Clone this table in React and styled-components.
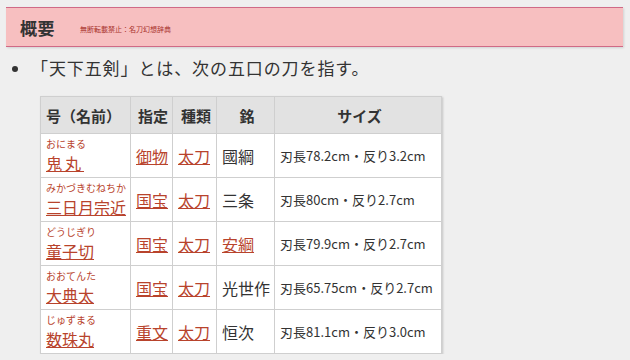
import React from 'react'
import styled, { createGlobalStyle } from 'styled-components'

const GlobalStyle = createGlobalStyle`
  body {
    margin: 0;
    background: #efefef;
    font-family: "Noto Sans CJK JP", "Noto Sans", sans-serif;
    color: #333;
  }
`

// ***** heading band *****
const Page = styled.div`
  padding: 7px 7px 0 6px;
`
const Heading = styled.div`
  display: flex;
  align-items: center;
  height: 38px;
  padding-left: 14px;
  background: #f7bfc0;
  border-top: 1px solid #d06a86;
  border-bottom: 1px solid #d06a86;
  box-shadow: 1px 1px 2px rgba(0, 0, 0, 0.12);
`
const Title = styled.h2`
  margin: 0;
  font-size: 17px;
  font-weight: bold;
  color: #333;
  letter-spacing: 0.5px;
`
const Notice = styled.span`
  margin-left: 25px;
  margin-top: 4px;
  font-size: 7px;
  color: #a8322c;
`

// ***** bullet list *****
const List = styled.ul`
  margin: 8px 0 0;
  padding-left: 25px;
  font-size: 17px;
  line-height: 26px;
  letter-spacing: 0.9px;
  color: #333;
  li::marker {
    font-size: 16px;
  }
`

// ***** swords table *****
const Table = styled.table`
  margin: 15px 0 0 34px;
  width: 401px;
  table-layout: fixed;
  border-collapse: collapse;
  background: #fff;
  box-shadow: 1px 1px 2px rgba(0, 0, 0, 0.18);
`
const Th = styled.th`
  box-sizing: border-box;
  height: 37px;
  padding: 0 2px 0 5px;
  background: #e2e2e2;
  border: 1px solid #cfcfcf;
  font-size: 15px;
  font-weight: bold;
  color: #333;
  white-space: nowrap;
  text-align: ${p => p.$left ? 'left' : 'center'};
  width: ${p => p.$w}px;
`
const Td = styled.td`
  height: 43px;
  padding: 0 0 0 5px;
  border: 1px solid #cfcfcf;
  font-size: ${p => p.$small ? 13 : 16}px;
  color: #333;
  vertical-align: middle;
  white-space: nowrap;
  overflow: hidden;
`
const NameCell = styled.div`
  display: flex;
  flex-direction: column;
  align-items: flex-start;
`
const Reading = styled.span`
  font-size: 10px;
  line-height: 15px;
  color: #b8432c;
`
const Name = styled.a`
  font-size: 16px;
  line-height: 24px;
  color: #b8432c;
  text-decoration: underline;
  letter-spacing: ${p => p.$spread ? '3px' : '0'};
`
const Link = styled.a`
  color: #b8432c;
  text-decoration: underline;
`

const swords = [
  { reading: 'おにまる', name: '鬼丸', spread: true, grade: '御物', type: '太刀', smith: '國綱', smithLink: false, size: '刃長78.2cm・反り3.2cm' },
  { reading: 'みかづきむねちか', name: '三日月宗近', grade: '国宝', type: '太刀', smith: '三条', smithLink: false, size: '刃長80cm・反り2.7cm' },
  { reading: 'どうじぎり', name: '童子切', grade: '国宝', type: '太刀', smith: '安綱', smithLink: true, size: '刃長79.9cm・反り2.7cm' },
  { reading: 'おおてんた', name: '大典太', grade: '国宝', type: '太刀', smith: '光世作', smithLink: false, size: '刃長65.75cm・反り2.7cm' },
  { reading: 'じゅずまる', name: '数珠丸', grade: '重文', type: '太刀', smith: '恒次', smithLink: false, size: '刃長81.1cm・反り3.0cm' },
]

const App = () => {
  return (
    <Page>
      <GlobalStyle />
      <Heading>
        <Title>概要</Title>
        <Notice>無断転載禁止：名刀幻想辞典</Notice>
      </Heading>
      <List>
        <li>「天下五剣」とは、次の五口の刀を指す。</li>
      </List>
      <Table>
        <thead>
          <tr>
            <Th $w={90} $left>号（名前）</Th>
            <Th $w={42}>指定</Th>
            <Th $w={44}>種類</Th>
            <Th $w={58}>銘</Th>
            <Th $w={167}>サイズ</Th>
          </tr>
        </thead>
        <tbody>
          {swords.map(s => (
            <tr key={s.name}>
              <Td>
                <NameCell>
                  <Reading>{s.reading}</Reading>
                  <Name href="#" $spread={s.spread}>{s.name}</Name>
                </NameCell>
              </Td>
              <Td><Link href="#">{s.grade}</Link></Td>
              <Td><Link href="#">{s.type}</Link></Td>
              <Td>{s.smithLink ? <Link href="#">{s.smith}</Link> : s.smith}</Td>
              <Td $small>{s.size}</Td>
            </tr>
          ))}
        </tbody>
      </Table>
    </Page>
  )
}

export default App
